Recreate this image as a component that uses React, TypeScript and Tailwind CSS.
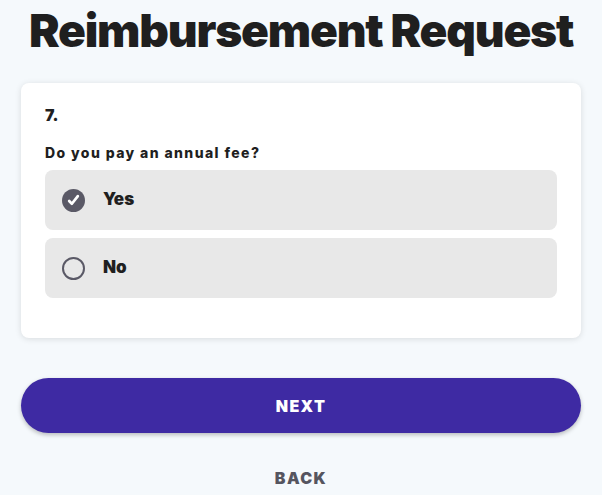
import { useState } from "react";

const options = ["Yes", "No"];

export default function App() {
  const [answer, setAnswer] = useState("Yes");

  return (
    <div className="min-h-screen bg-[#f5f9fc] px-[21px] font-['Inter',sans-serif] text-[#1f1f1f]">
      {/* Title */}
      <h1 className="-mx-4 pt-[6px] text-center text-[46px] leading-[48px] font-black tracking-[-1.2px] whitespace-nowrap">
        Reimbursement Request
      </h1>

      {/* Question card */}
      <div className="mt-[29px] rounded-lg bg-white px-6 pt-[22px] pb-[40px] shadow-[0_1px_6px_rgba(0,0,0,0.12)]">
        <div className="text-[16px] leading-5 font-black">7.</div>
        <div className="mt-[18px] text-[14px] leading-5 font-extrabold tracking-[1.4px]">
          Do you pay an annual fee?
        </div>
        <div className="mt-[7px] flex flex-col gap-2">
          {options.map((opt) => {
            const selected = answer === opt;
            return (
              <button
                key={opt}
                onClick={() => setAnswer(opt)}
                className="flex h-[60px] items-center gap-[18px] rounded-lg bg-[#e8e8e8] px-[17px] text-left"
              >
                {selected ? (
                  <span className="flex h-[23px] w-[23px] items-center justify-center rounded-full bg-[#5a5966]">
                    <svg width="13" height="13" viewBox="0 0 24 24" fill="none">
                      <path d="M4 13l5 5L20 4" stroke="white" strokeWidth="5" strokeLinecap="round" strokeLinejoin="round" />
                    </svg>
                  </span>
                ) : (
                  <span className="h-[23px] w-[23px] rounded-full border-2 border-[#5a5966]" />
                )}
                <span className="text-[17px] font-black">{opt}</span>
              </button>
            );
          })}
        </div>
      </div>

      {/* Actions */}
      <button className="mt-[40px] flex h-[55px] w-full items-center justify-center rounded-full bg-[#3e2aa3] text-[16px] font-black tracking-[1.4px] text-white shadow-[0_2px_4px_rgba(0,0,0,0.25)]">
        NEXT
      </button>
      <div className="mt-[35px] text-center text-[16px] leading-5 font-black tracking-[1.4px] text-[#55555f]">
        BACK
      </div>
    </div>
  );
}
